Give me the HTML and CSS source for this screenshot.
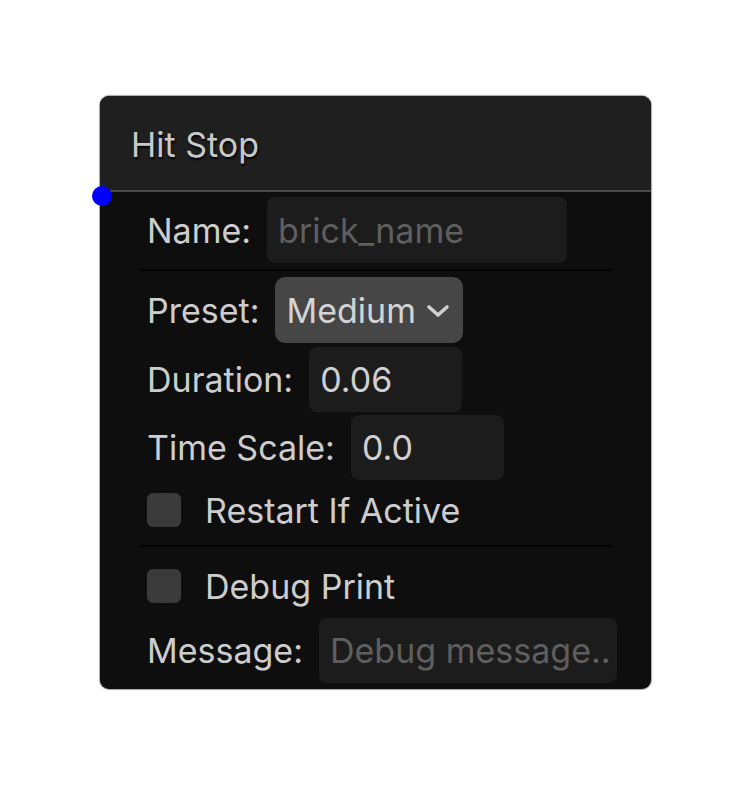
FILE: index.html
```html
<!DOCTYPE html>
<html>
<head>
<meta charset="utf-8">
<link rel="stylesheet" href="styles.css">
</head>
<body>
<div class="canvas">
  <div class="node">
    <div class="header"><span class="title">Hit Stop</span></div>
    <div class="body">
      <div class="row row-name">
        <span class="label">Name:</span>
        <div class="field field-name placeholder">brick_name</div>
      </div>
      <div class="sep"></div>
      <div class="row row-preset">
        <span class="label">Preset:</span>
        <div class="select">
          <span>Medium</span>
          <svg class="chev" width="24" height="16" viewBox="0 0 24 16"><polyline points="3,4 12,12 21,4" fill="none" stroke="#d0d0d0" stroke-width="3.6" stroke-linecap="round" stroke-linejoin="round"/></svg>
        </div>
      </div>
      <div class="row row-dur">
        <span class="label">Duration:</span>
        <div class="field field-num">0.06</div>
      </div>
      <div class="row row-ts">
        <span class="label">Time Scale:</span>
        <div class="field field-num">0.0</div>
      </div>
      <div class="row row-check">
        <span class="box"></span>
        <span class="label">Restart If Active</span>
      </div>
      <div class="sep sep2"></div>
      <div class="row row-check row-debug">
        <span class="box"></span>
        <span class="label">Debug Print</span>
      </div>
      <div class="row row-msg">
        <span class="label">Message:</span>
        <div class="field field-msg placeholder">Debug message..</div>
      </div>
    </div>
    <span class="port"></span>
  </div>
</div>
</body>
</html>
```
FILE: styles.css
```css
html, body {
  margin: 0;
  padding: 0;
  background: #ffffff;
}
body {
  width: 752px;
  height: 790px;
  font-family: "Inter", "Noto Sans", sans-serif;
  font-size: 34px;
  color: #cdcdcd;
}
.canvas {
  padding: 96px 0 0 100px;
}
.node {
  position: relative;
  width: 551px;
  height: 593px;
  background: #0e0e0e;
  border-radius: 9px;
  box-shadow: 0 0 1px 1px rgba(0,0,0,0.35);
  display: flex;
  flex-direction: column;
}
.header {
  height: 96px;
  flex: none;
  background: #1f1f1f;
  border-radius: 9px 9px 0 0;
  border-bottom: 2px solid #4a4a4a;
  display: flex;
  align-items: center;
  padding-left: 31px;
  box-sizing: border-box;
}
.title {
  color: #c9c9c9;
  text-shadow: 1px 2px 2px rgba(0,0,0,0.9);
  margin-top: 2px;
}
.body {
  padding: 5px 34px 6px 47px;
  display: flex;
  flex-direction: column;
}
.row {
  display: flex;
  align-items: center;
  gap: 16px;
}
.label {
  color: #cdcdcd;
  white-space: nowrap;
}
.field {
  height: 66px;
  background: #1c1c1c;
  border-radius: 8px;
  box-sizing: border-box;
  padding-left: 11px;
  display: flex;
  align-items: center;
  color: #d0d0d0;
}
.placeholder {
  color: #5f5f5f;
}
.row-name .field-name {
  width: 300px;
}
.sep {
  height: 2px;
  background: #050505;
  margin: 6px 5px 6px -7px;
}
.row-preset {
  height: 66px;
}
.select {
  height: 66px;
  background: #464646;
  border-radius: 10px;
  box-sizing: border-box;
  padding: 0 13px 0 11px;
  display: flex;
  align-items: center;
  color: #d4d4d4;
}
.chev {
  margin-left: 10px;
  margin-top: 1px;
}
.row-dur {
  margin-top: 4px;
}
.row-dur .field-num {
  width: 153px;
  height: 65px;
}
.row-ts {
  margin-top: 3px;
}
.row-ts .field-num {
  width: 153px;
  height: 65px;
}
.row-check {
  height: 54px;
  margin-top: 3px;
  gap: 24px;
}
.box {
  width: 34px;
  height: 34px;
  border-radius: 6px;
  background: #3a3a3a;
  flex: none;
}
.sep2 {
  margin: 8px 5px 12px -7px;
}
.row-debug {
  margin-top: 0;
}
.row-msg {
  margin-top: 5px;
}
.field-msg {
  width: 299px;
  height: 65px;
  overflow: hidden;
  white-space: nowrap;
}
.port {
  position: absolute;
  left: -8px;
  top: 90px;
  width: 20px;
  height: 20px;
  border-radius: 50%;
  background: #0000ff;
}
```
